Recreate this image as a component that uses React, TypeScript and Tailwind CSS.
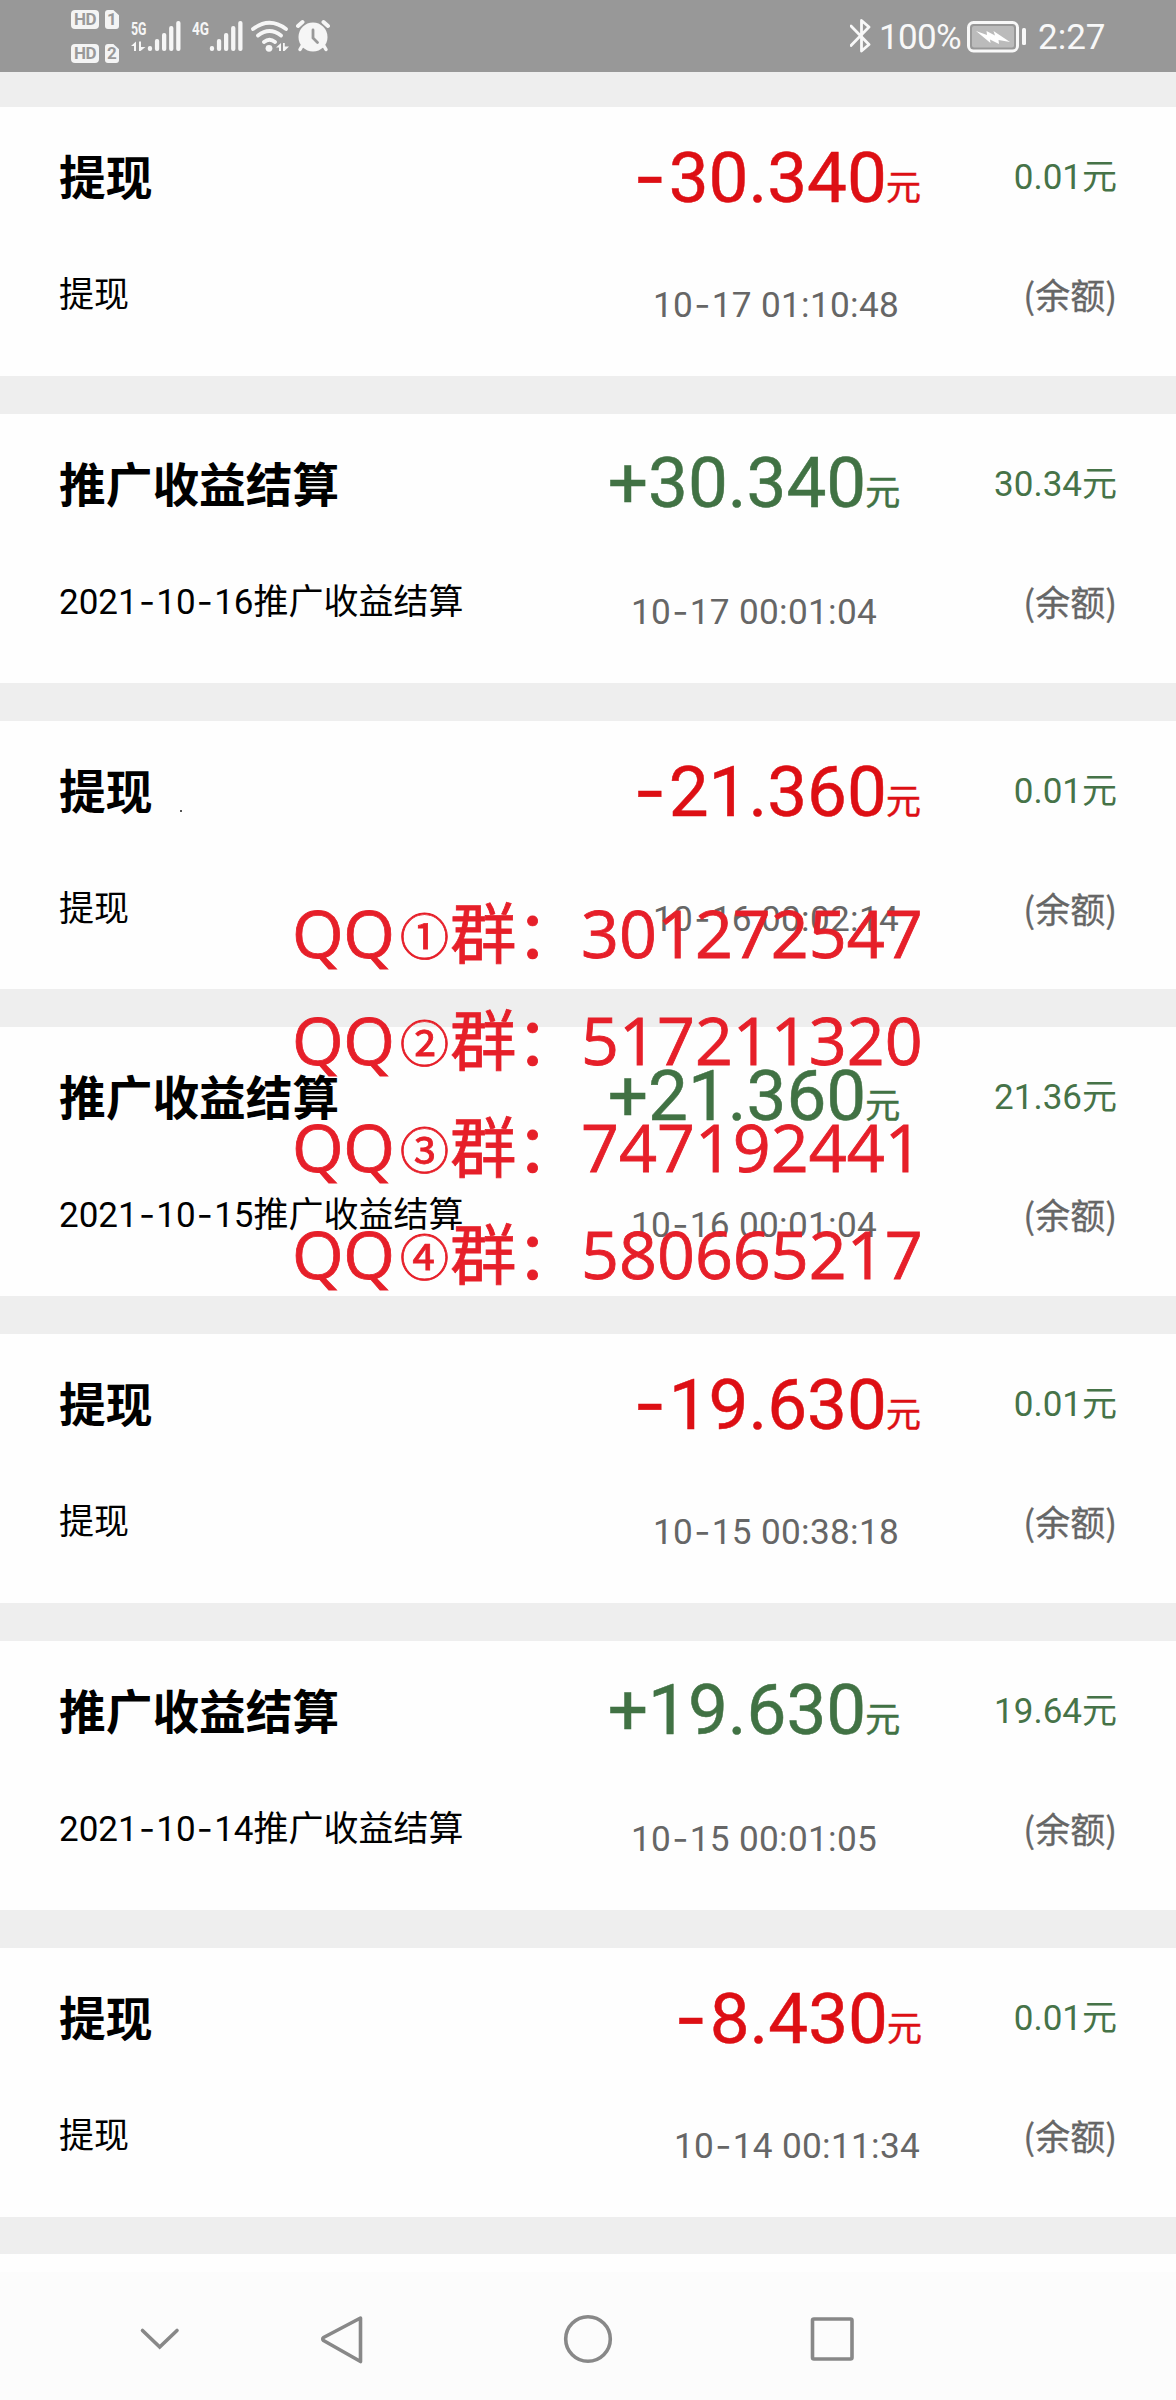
import React from "react";

type Kind = "out" | "in";
type Entry = {
  kind: Kind;
  title: string;
  note: string;
  amount: string;
  time: string;
  balance: string;
  narrow?: boolean;
  speck?: boolean;
};

const entries: Entry[] = [
  { kind: "out", title: "提现", note: "提现", amount: "-30.340", time: "10-17 01:10:48", balance: "0.01" },
  { kind: "in", title: "推广收益结算", note: "2021-10-16推广收益结算", amount: "+30.340", time: "10-17 00:01:04", balance: "30.34" },
  { kind: "out", title: "提现", note: "提现", amount: "-21.360", time: "10-16 00:02:14", balance: "0.01", speck: true },
  { kind: "in", title: "推广收益结算", note: "2021-10-15推广收益结算", amount: "+21.360", time: "10-16 00:01:04", balance: "21.36" },
  { kind: "out", title: "提现", note: "提现", amount: "-19.630", time: "10-15 00:38:18", balance: "0.01" },
  { kind: "in", title: "推广收益结算", note: "2021-10-14推广收益结算", amount: "+19.630", time: "10-15 00:01:05", balance: "19.64" },
  { kind: "out", title: "提现", note: "提现", amount: "-8.430", time: "10-14 00:11:34", balance: "0.01", narrow: true },
];

const groups = [
  { mark: "①", number: "301272547" },
  { mark: "②", number: "517211320" },
  { mark: "③", number: "747192441" },
  { mark: "④", number: "580665217" },
];

function Dashed({ text }: { text: string }) {
  return (
    <>
      {text.split(/(-)/).map((part, i) =>
        part === "-" ? (
          <span key={i} className="inline-block w-[0.53em] text-center font-['Inter']">-</span>
        ) : (
          <React.Fragment key={i}>{part}</React.Fragment>
        )
      )}
    </>
  );
}

function Card({ e }: { e: Entry }) {
  const tone = e.kind === "out" ? "text-[#dd0f14]" : "text-[#417244]";
  const left = e.narrow ? "w-[578px]" : e.kind === "out" ? "w-[557px]" : "w-[535px]";
  return (
    <section className="flex h-[268.8px] bg-[#fefefe] pl-[59px]">
      <div className={left + " shrink-0 whitespace-nowrap text-black"}>
        <h2 className="mt-[42px] flex h-[60px] items-center text-[46.7px] font-bold leading-[60px]">
          {e.title}
          {e.speck && <i className="ml-[28px] mt-[36px] size-[2px] bg-[#555]" />}
        </h2>
        <p className={(e.kind === "out" ? "mt-[62px]" : "mt-[60px]") + " h-[50px] text-[35px] leading-[50px]"}><Dashed text={e.note} /></p>
      </div>
      <div className="w-[320px] shrink-0 whitespace-nowrap text-center">
        <p className={tone + " mt-[19px] h-[100px] text-[71px] leading-[100px] [-webkit-text-stroke:0.5px_currentColor]"}>
          <Dashed text={e.amount} />
          <span className="relative -top-[2px] -ml-[1px] text-[35px]">元</span>
        </p>
        <p className="mt-[53px] h-[50px] text-[35.200px] leading-[50px] tracking-[0.3px] text-[#666]"><Dashed text={e.time} /></p>
      </div>
      <div className="ml-auto mr-[59px] whitespace-nowrap text-right text-[35px] leading-[50px]">
        <p className="mt-[46px] h-[50px] text-[#467348]">{e.balance}元</p>
        <p className="mt-[66px] h-[50px] text-[#666] font-['Noto_Sans_CJK_SC'] [-webkit-text-stroke:0.3px_currentColor]">(余额)</p>
      </div>
    </section>
  );
}

function HdBadge({ n }: { n: number }) {
  return (
    <div className="flex gap-[6px] text-[17px] font-bold leading-[19px] text-[#999]">
      <span className="h-[19px] w-[28px] rounded-[4px] bg-[#f4f4f4] text-center tracking-[-0.5px]">HD</span>
      <span className="h-[19px] w-[14px] rounded-[3px] bg-[#f4f4f4] text-center [clip-path:polygon(0_0,60%_0,100%_28%,100%_100%,0_100%)]">{n}</span>
    </div>
  );
}

function Signal({ label, arrows }: { label: string; arrows?: boolean }) {
  const off = arrows ? 19 : 20;
  const tops = [46, 39, 33, 26, 21];
  return (
    <svg width="52" height="72" viewBox="0 0 52 72" fill="#f6f6f6">
      <text x="0" y="34.5" fontSize="18" fontWeight="700" fontFamily="Roboto" textLength={arrows ? 15.5 : 17} lengthAdjust="spacingAndGlyphs">{label}</text>
      {arrows && <path d="M0 46L5 41.5V51H3V46ZM8 41.5h2v5.5h4.5L9.500 51H8Z" />}
      {tops.map((t, i) => (
        <rect key={i} x={off - 2.200 + i * 7.1} y={t} width="4.3" height={51 - t} rx="2" />
      ))}
    </svg>
  );
}

function Wifi() {
  return (
    <svg width="38" height="72" viewBox="0 0 38 72" fill="none" stroke="#f6f6f6" strokeWidth="3.8" strokeLinecap="round">
      <path d="M2 29Q18.500 16.500 35 29M7 35.500Q18.500 26.500 30 35.500M13 42Q18.500 37.500 24 42" />
      <circle cx="18" cy="48.300" r="3.400" fill="#f6f6f6" stroke="none" />
      <path d="M25 47.500L30 43v8h-2v-3.500ZM32 43h1.800v3.500H38L33.500 51H32Z" fill="#f6f6f6" stroke="none" />
    </svg>
  );
}

function Alarm() {
  return (
    <svg width="34" height="72" viewBox="0 0 34 72" fill="none" stroke="#f6f6f6" strokeLinecap="round">
      <circle cx="17" cy="37" r="14.500" fill="#f6f6f6" stroke="none" />
      <path d="M2 26L6.500 22M32 26L27.500 22" strokeWidth="4" />
      <path d="M6 46L4 49.500M28 46l2 3.500" strokeWidth="3.500" />
      <path d="M17 30v8l4.500 4.500" stroke="#999" strokeWidth="2.800" />
    </svg>
  );
}

function StatusBar() {
  return (
    <header className="flex h-[72px] bg-[#989898] pl-[71px] text-[#f8f8f8]">
      <div className="flex w-[60px] flex-col gap-[15px] pt-[10px]">
        <HdBadge n={1} />
        <HdBadge n={2} />
      </div>
      <Signal label="5G" arrows />
      <div className="w-[9px]" />
      <Signal label="4G" />
      <div className="w-[7px]" />
      <Wifi />
      <div className="w-[7px]" />
      <Alarm />
      <div className="ml-auto flex pr-[71px] text-[35px] leading-[76px]">
        <svg width="24" height="72" viewBox="0 0 24 72" fill="none" stroke="#f8f8f8" strokeWidth="2.8" strokeLinejoin="round" strokeLinecap="round">
          <path d="M1 26L19 44.500L11.500 51V20.500L19 27L1 45.500" />
        </svg>
        <span className="ml-[5px] w-[87px] tracking-[-0.7px]">100%</span>
        <svg width="62" height="72" viewBox="0 0 62 72" fill="none">
          <rect x="2.500" y="22.500" width="49" height="28.500" rx="5" stroke="#f8f8f8" strokeWidth="3" />
          <rect x="6" y="26" width="42" height="21.500" rx="2" fill="#bbb" />
          <path d="M10 31L21 35L20.500 31L29 35.500L27.500 31L44 42L32.500 40L33 44L24 39.500L24.500 43Z" fill="#fff" />
          <rect x="56" y="28" width="4" height="17" rx="1.500" fill="#f8f8f8" />
        </svg>
        <span className="ml-[10px] w-[67px]">2:27</span>
      </div>
    </header>
  );
}

function Watermark() {
  return (
    <div className="absolute left-[292px] top-[879px] whitespace-nowrap font-['Open_Sans','Noto_Sans_CJK_SC',sans-serif] text-[66.400px] leading-[107px] text-[#e61f29] [-webkit-text-stroke:0.8px_currentColor]">
      {groups.map((g) => (
        <div key={g.mark} className="flex h-[107px]">
          <span className="w-[107px] tracking-[-0.4px]">QQ</span>
          <span className="flex w-[51px] justify-center pt-[1px] text-[49px] font-['Noto_Sans_CJK_SC']">{g.mark}</span>
          <span className="w-[66px]">群</span>
          <span className="w-[65px]">：</span>
          <span>{g.number}</span>
        </div>
      ))}
    </div>
  );
}

function NavBar() {
  return (
    <nav className="mt-[18px] flex h-[128px] bg-[#fcfcfc] pl-[138px]">
      <svg width="44" height="128" viewBox="138 0 44 128" fill="none" stroke="#888" strokeWidth="3.6" strokeLinecap="round">
        <path d="M142.500 58.500L159.700 75L177 58.500" />
      </svg>
      <svg className="ml-[136px]" width="48" height="128" viewBox="318 0 48 128" fill="none" stroke="#888" strokeWidth="3.600" strokeLinejoin="round">
        <path d="M360.500 46L323.500 65.500Q322 67 323.500 68.500L360.500 89.500Z" />
      </svg>
      <svg className="ml-[196px]" width="52" height="128" viewBox="562 0 52 128" fill="none" stroke="#888" strokeWidth="3.600">
        <circle cx="588" cy="67" r="22.300" />
      </svg>
      <svg className="ml-[194px]" width="48" height="128" viewBox="808 0 48 128" fill="none" stroke="#888" strokeWidth="3.600">
        <rect x="812.500" y="47" width="39.500" height="40" rx="1.500" />
      </svg>
    </nav>
  );
}

export default function App() {
  return (
    <div className="relative h-[2400px] w-[1176px] overflow-hidden bg-[#fefefe] font-['Roboto','Noto_Sans_CJK_SC',sans-serif]">
      <StatusBar />
      <main className="flex flex-col gap-[38px] bg-[#eee] pb-[37px] pt-[35px]">
        {entries.map((e) => (
          <Card key={e.time} e={e} />
        ))}
      </main>
      <NavBar />
      <Watermark />
    </div>
  );
}
